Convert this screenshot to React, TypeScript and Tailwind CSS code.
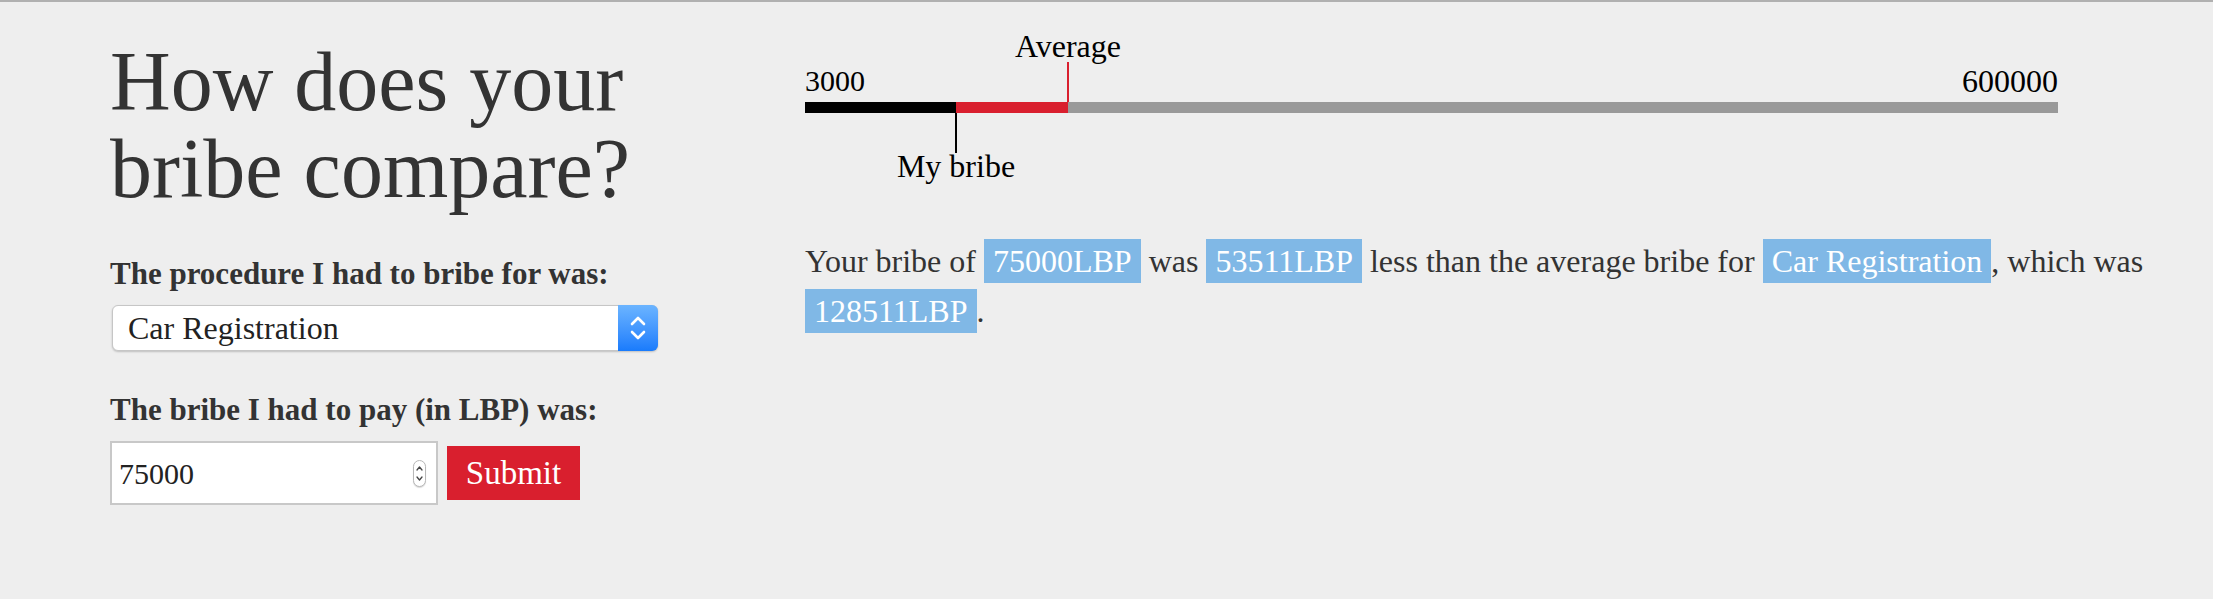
import { useState } from 'react';

const MIN = 3000;
const MAX = 600000;
const AVERAGE = 128511;
const BAR_WIDTH = 1253;

function pos(value: number) {
  return Math.round(((value - MIN) / (MAX - MIN)) * BAR_WIDTH);
}

function Highlight({ children }: { children: React.ReactNode }) {
  return <span className="bg-[#80b8e6] text-white px-[9px] py-[4px]">{children}</span>;
}

function SelectArrows() {
  return (
    <svg width="18" height="30" viewBox="0 0 18 30" fill="none" stroke="white" strokeWidth="2.6" strokeLinecap="round" strokeLinejoin="round">
      <path d="M3 11 L9 5 L15 11" />
      <path d="M3 19 L9 25 L15 19" />
    </svg>
  );
}

function Spinner() {
  return (
    <div className="w-[13px] h-[27px] rounded-full border border-[#b8b8b8] bg-white flex items-center justify-center shadow-[0_1px_1px_rgba(0,0,0,0.15)]">
      <svg width="9" height="21" viewBox="0 0 9 21" fill="none" stroke="#444" strokeWidth="1.3" strokeLinecap="round" strokeLinejoin="round">
        <path d="M2 7 L4.5 4 L7 7" />
        <path d="M2 14 L4.5 17 L7 14" />
      </svg>
    </div>
  );
}

function Chart({ bribe }: { bribe: number }) {
  const mine = pos(bribe);
  const avg = pos(AVERAGE);
  const low = Math.min(mine, avg);
  const high = Math.max(mine, avg);
  return (
    <div className="relative h-[200px] text-black text-[32px] leading-[32px]" style={{ width: BAR_WIDTH }}>
      <div className="absolute top-[28px] -translate-x-1/2 whitespace-nowrap" style={{ left: avg }}>Average</div>
      <div className="absolute top-[60px] h-[40px] w-[2px] bg-[#d91f2e]" style={{ left: avg - 1 }} />
      <div className="absolute top-[63px] left-0 text-[30px]">3000</div>
      <div className="absolute top-[63px] right-0">600000</div>
      <div className="absolute top-[100px] left-0 right-0 h-[11px] flex">
        <div className="bg-black h-full" style={{ width: low }} />
        <div className="bg-[#d91f2e] h-full" style={{ width: high - low }} />
        <div className="bg-[#999999] h-full flex-1" />
      </div>
      <div className="absolute top-[111px] h-[40px] w-[2px] bg-black" style={{ left: mine - 1 }} />
      <div className="absolute top-[148px] -translate-x-1/2 whitespace-nowrap" style={{ left: mine }}>My bribe</div>
    </div>
  );
}

export default function App() {
  const [bribe, setBribe] = useState('75000');
  const value = Number(bribe) || 75000;
  const diff = Math.abs(AVERAGE - value);

  return (
    <div className="min-h-[599px] bg-[#eeeeee] border-t-2 border-[#b0b0b0] font-['Liberation_Serif',serif] text-[#333333]">
      <div className="flex pl-[110px]">
        <div className="w-[550px] shrink-0 pt-[36px]">
          <h1 className="text-[84px] leading-[87px] font-normal">How does your bribe compare?</h1>
          <label className="block mt-[44px] text-[31px] leading-[36px] font-bold">The procedure I had to bribe for was:</label>
          <div className="mt-[13px] ml-[2px] w-[546px] h-[46px] flex bg-white border border-[#c6c6c6] rounded-[6px] shadow-[0_1px_2px_rgba(0,0,0,0.2)]">
            <div className="flex-1 flex items-center pl-[15px] text-[32px] text-[#222222]">Car Registration</div>
            <div className="w-[40px] -my-px -mr-px rounded-r-[6px] bg-gradient-to-b from-[#6bb4ff] to-[#187bfc] flex items-center justify-center">
              <SelectArrows />
            </div>
          </div>
          <label className="block mt-[41px] text-[31px] leading-[36px] font-bold">The bribe I had to pay (in LBP) was:</label>
          <div className="mt-[13px] flex items-start">
            <div className="w-[328px] h-[64px] bg-white border-2 border-[#c8c8c8] flex items-center pl-[7px] pr-[10px]">
              <input
                value={bribe}
                onChange={e => setBribe(e.target.value)}
                className="flex-1 min-w-0 bg-transparent outline-none text-[30px] text-[#222222]"
              />
              <Spinner />
            </div>
            <button className="ml-[9px] mt-[5px] w-[133px] h-[54px] bg-[#d91f2e] text-white text-[33px] leading-none">Submit</button>
          </div>
        </div>
        <div className="ml-[145px] w-[1370px]">
          <Chart bribe={value} />
          <p className="mt-[34px] text-[32px] leading-[50px]">
            Your bribe of <Highlight>{value}LBP</Highlight> was <Highlight>{diff}LBP</Highlight> {value < AVERAGE ? 'less' : 'more'} than the average bribe for <Highlight>Car Registration</Highlight>, which was <Highlight>{AVERAGE}LBP</Highlight>.
          </p>
        </div>
      </div>
    </div>
  );
}
